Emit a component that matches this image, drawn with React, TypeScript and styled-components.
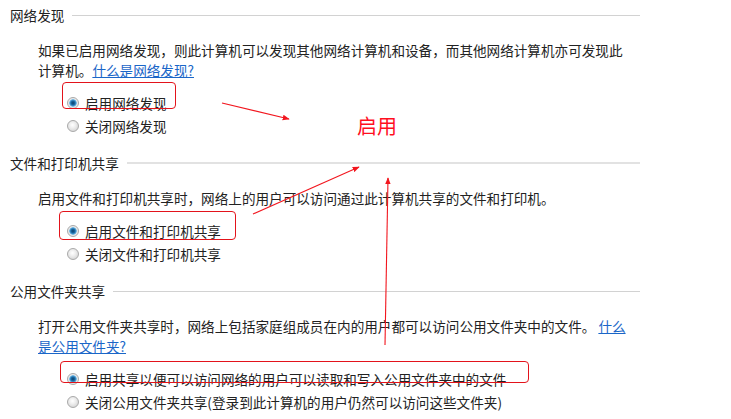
import React from "react";
import styled, { createGlobalStyle } from "styled-components";

const GlobalStyle = createGlobalStyle`
  html, body {
    margin: 0;
    padding: 0;
    background: #ffffff;
  }
  body {
    font-family: "Noto Sans CJK SC", "Noto Sans", sans-serif;
    color: #222222;
  }
`;

const Page = styled.div`
  position: relative;
  width: 731px;
  height: 419px;
  overflow: hidden;
  padding: 5px 0 0 10px;
  box-sizing: border-box;
  font-size: 13.6px;
`;

const Section = styled.section`
  & + & {
    margin-top: 16px;
  }
`;

const HeadingRow = styled.div`
  display: flex;
  align-items: center;
  gap: 8px;
  width: 630px;
  height: 20px;
  line-height: 20px;
`;

const HeadingText = styled.span`
  white-space: nowrap;
`;

const Rule = styled.div<{ $thick?: boolean }>`
  flex: 1;
  height: ${(p) => (p.$thick ? 2 : 1)}px;
  background: ${(p) => (p.$thick ? "#e2e2e2" : "#d2d2d2")};
`;

const Paragraph = styled.p`
  margin: 15px 0 0 28px;
  width: 594px;
  line-height: 20px;
`;

const HelpLink = styled.a`
  color: #1a66c8;
  text-decoration: underline;
  cursor: pointer;
`;

const RadioList = styled.div`
  margin: 11px 0 0 57px;
  display: flex;
  flex-direction: column;
`;

const RadioRow = styled.label`
  display: flex;
  align-items: center;
  gap: 6px;
  height: 23px;
  white-space: nowrap;
`;

const RadioDot = styled.span<{ $checked?: boolean }>`
  width: 12px;
  height: 12px;
  border-radius: 50%;
  box-sizing: border-box;
  border: 1px solid #a9a9a9;
  flex-shrink: 0;
  background: ${(p) =>
    p.$checked
      ? "radial-gradient(circle at 50% 50%, #0b3f6b 0, #1b6aa3 2px, #5fb0e4 3.4px, #e6e6e6 4px, #f4f4f4 6px)"
      : "radial-gradient(circle at 45% 40%, #ffffff 0, #eeeeee 3px, #d9d9d9 6px)"};
`;

const Overlay = styled.svg`
  position: absolute;
  left: 0;
  top: 0;
  pointer-events: none;
`;

const Highlight = styled.div`
  position: absolute;
  border: 1.5px solid #e3131b;
  border-radius: 4px;
  box-sizing: border-box;
  pointer-events: none;
`;

const Note = styled.span`
  position: absolute;
  left: 357px;
  top: 113px;
  font-size: 20px;
  line-height: 26px;
  color: #ff0f1f;
`;

type Option = { label: string; checked?: boolean };

function Radios({ options }: { options: Option[] }) {
  return (
    <RadioList>
      {options.map((o) => (
        <RadioRow key={o.label}>
          <RadioDot $checked={o.checked} />
          {o.label}
        </RadioRow>
      ))}
    </RadioList>
  );
}

const boxes = [
  { left: 62, top: 82, width: 114, height: 27 },
  { left: 59, top: 211, width: 177, height: 29 },
  { left: 60, top: 361, width: 469, height: 22 },
];

const arrows = [
  { x1: 222, y1: 103, x2: 289, y2: 119 },
  { x1: 253, y1: 214, x2: 359, y2: 167 },
  { x1: 385, y1: 345, x2: 388, y2: 178 },
];

export default function App() {
  return (
    <>
      <GlobalStyle />
      <Page>
        <Section>
          <HeadingRow>
            <HeadingText>网络发现</HeadingText>
            <Rule />
          </HeadingRow>
          <Paragraph>
            如果已启用网络发现，则此计算机可以发现其他网络计算机和设备，而其他网络计算机亦可发现此计算机。
            <HelpLink>什么是网络发现?</HelpLink>
          </Paragraph>
          <Radios
            options={[
              { label: "启用网络发现", checked: true },
              { label: "关闭网络发现" },
            ]}
          />
        </Section>

        <Section>
          <HeadingRow>
            <HeadingText>文件和打印机共享</HeadingText>
            <Rule $thick />
          </HeadingRow>
          <Paragraph>
            启用文件和打印机共享时，网络上的用户可以访问通过此计算机共享的文件和打印机。
          </Paragraph>
          <Radios
            options={[
              { label: "启用文件和打印机共享", checked: true },
              { label: "关闭文件和打印机共享" },
            ]}
          />
        </Section>

        <Section>
          <HeadingRow>
            <HeadingText>公用文件夹共享</HeadingText>
            <Rule />
          </HeadingRow>
          <Paragraph>
            打开公用文件夹共享时，网络上包括家庭组成员在内的用户都可以访问公用文件夹中的文件。{" "}
            <HelpLink>什么是公用文件夹?</HelpLink>
          </Paragraph>
          <Radios
            options={[
              {
                label: "启用共享以便可以访问网络的用户可以读取和写入公用文件夹中的文件",
                checked: true,
              },
              { label: "关闭公用文件夹共享(登录到此计算机的用户仍然可以访问这些文件夹)" },
            ]}
          />
        </Section>

        {boxes.map((b, i) => (
          <Highlight key={i} style={b} />
        ))}

        <Overlay width={731} height={419} viewBox="0 0 731 419">
          <defs>
            <marker
              id="head"
              viewBox="0 0 10 10"
              refX="9"
              refY="5"
              markerWidth="7"
              markerHeight="7"
              orient="auto-start-reverse"
              markerUnits="userSpaceOnUse"
            >
              <path d="M0 1 L10 5 L0 9 Z" fill="#f2161e" />
            </marker>
          </defs>
          {arrows.map((a, i) => (
            <line
              key={i}
              {...a}
              stroke="#f2161e"
              strokeWidth={1.1}
              markerEnd="url(#head)"
            />
          ))}
        </Overlay>

        <Note>启用</Note>
      </Page>
    </>
  );
}
